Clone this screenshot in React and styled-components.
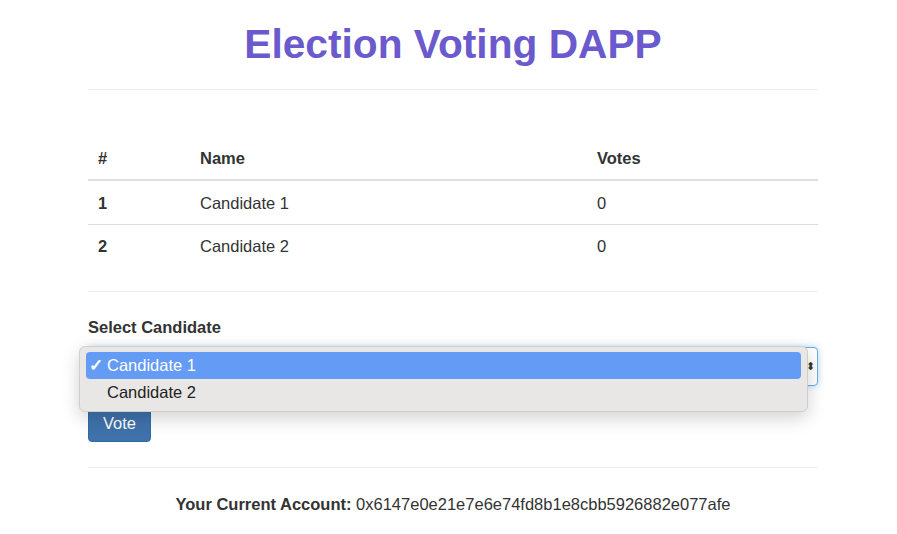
import React from "react";
import styled, { createGlobalStyle } from "styled-components";

const candidates = [
  { id: 1, name: "Candidate 1", votes: 0 },
  { id: 2, name: "Candidate 2", votes: 0 },
];

const account = "0x6147e0e21e7e6e74fd8b1e8cbb5926882e077afe";

const App = () => {
  return (
    <>
      <GlobalStyle />
      <Container>
        <Title>Election Voting DAPP</Title>
        <Rule />
        <Table>
          <thead>
            <tr>
              <Th>#</Th>
              <Th>Name</Th>
              <Th>Votes</Th>
            </tr>
          </thead>
          <tbody>
            {candidates.map((c, i) => (
              <tr key={c.id}>
                <Td first={i === 0} bold>
                  {c.id}
                </Td>
                <Td first={i === 0}>{c.name}</Td>
                <Td first={i === 0}>{c.votes}</Td>
              </tr>
            ))}
          </tbody>
        </Table>
        <Rule />
        <Form>
          <Label>Select Candidate</Label>
          <SelectWrap>
            <SelectBox>
              <Arrow>⬍</Arrow>
            </SelectBox>
            <Menu>
              <Option active>
                <Check>✓</Check>Candidate 1
              </Option>
              <Option>
                <Check />
                Candidate 2
              </Option>
            </Menu>
          </SelectWrap>
          <Button>Vote</Button>
        </Form>
        <Rule />
        <Account>
          <b>Your Current Account:</b> {account}
        </Account>
      </Container>
    </>
  );
};

const GlobalStyle = createGlobalStyle`
  body {
    margin: 0;
    background: #fff;
    color: #333;
    font-family: "Liberation Sans", Arial, Helvetica, sans-serif;
    font-size: 16.5px;
  }
`;

const Container = styled.div`
  width: 730px;
  margin-left: 88px;
`;

const Title = styled.h1`
  margin: 22px 0 23px;
  font-size: 40.7px;
  line-height: 44px;
  font-weight: 700;
  text-align: center;
  color: #6a5acd;
`;

const Rule = styled.hr`
  margin: 0;
  border: 0;
  border-top: 1px solid #eee;
`;

const Table = styled.table`
  width: 100%;
  border-collapse: collapse;
  margin: 47px 0 24px;
`;

const Th = styled.th`
  text-align: left;
  padding: 10px;
  line-height: 22px;
  font-weight: 700;
  border-bottom: 2px solid #ddd;
  &:first-child {
    width: 82px;
  }
  &:nth-child(2) {
    width: 377px;
  }
`;

const Td = styled.td`
  padding: 10.5px 10px 10px;
  line-height: 22px;
  font-weight: ${(p) => (p.bold ? 700 : 400)};
  border-top: ${(p) => (p.first ? "0" : "1px solid #ddd")};
`;

const Form = styled.div`
  padding: 24px 0 25px;
`;

const Label = styled.div`
  font-weight: 700;
  line-height: 22px;
  margin-bottom: 9px;
`;

const SelectWrap = styled.div`
  position: relative;
`;

const SelectBox = styled.div`
  height: 39px;
  box-sizing: border-box;
  border: 1px solid #66afe9;
  border-radius: 4px;
  box-shadow: 0 0 6px rgba(102, 175, 233, 0.5);
  background: #fff;
  display: flex;
  align-items: center;
  justify-content: flex-end;
  padding-right: 2px;
`;

const Arrow = styled.span`
  font-size: 11px;
  color: #333;
`;

const Menu = styled.div`
  position: absolute;
  left: -9px;
  top: -1px;
  width: 729px;
  box-sizing: border-box;
  padding: 5px 6px;
  background: #e9e7e6;
  border: 1px solid #d0cecd;
  border-radius: 6px;
  box-shadow: 0 6px 18px rgba(0, 0, 0, 0.18);
  z-index: 5;
`;

const Option = styled.div`
  display: flex;
  align-items: center;
  height: 27px;
  border-radius: 4px;
  padding-left: 3px;
  font-size: 16.5px;
  color: ${(p) => (p.active ? "#fff" : "#222")};
  background: ${(p) => (p.active ? "#649bf5" : "transparent")};
`;

const Check = styled.span`
  display: inline-block;
  width: 18px;
  font-size: 17px;
  font-weight: 700;
`;

const Button = styled.button`
  margin-top: 8px;
  height: 48px;
  width: 63px;
  padding: 11px 0 0;
  border: 1px solid #2e6da4;
  border-radius: 4px;
  background: #3f72ab;
  color: #fff;
  font-family: inherit;
  font-size: 16.5px;
`;

const Account = styled.p`
  margin: 25px 0 0;
  text-align: center;
  line-height: 22px;
`;

export default App;
